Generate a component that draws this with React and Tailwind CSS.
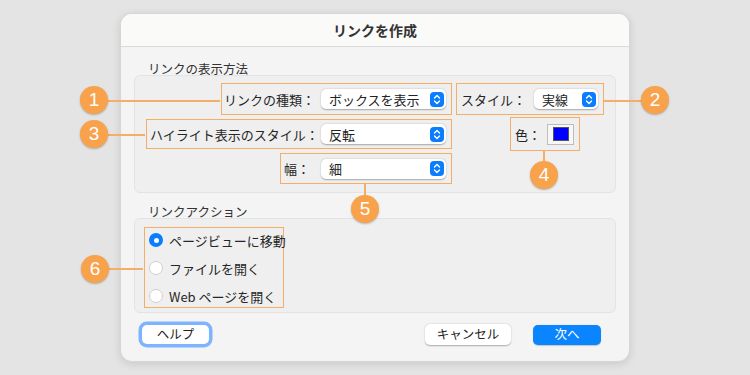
import React from 'react';

const FONT = { fontFamily: '"Noto Sans CJK JP", "Noto Sans", sans-serif' };

const Stepper = () => (
  <span className="flex h-[15px] w-[14px] items-center justify-center rounded-[4px] bg-[#0a7cff]">
    <svg width="8" height="11" viewBox="0 0 8 11" fill="none" stroke="white" strokeWidth="1.4" strokeLinecap="round" strokeLinejoin="round">
      <path d="M1.5 4 L4 1.5 L6.5 4" />
      <path d="M1.5 7 L4 9.5 L6.5 7" />
    </svg>
  </span>
);

const Popup = ({ value, width }) => (
  <div
    className={`flex h-[20px] items-center justify-between rounded-[5px] bg-white pl-[8px] pr-[2px] text-[13px] text-[#222] shadow-[0_0.5px_1.5px_rgba(0,0,0,0.3)] ${width}`}
  >
    <span className="leading-none">{value}</span>
    <Stepper />
  </div>
);

const Hl = ({ className = '', children }) => (
  <div className={`flex items-center justify-between border-[1.5px] border-[#f4ae68] ${className}`}>
    {children}
  </div>
);

const Label = ({ children }) => <span className="whitespace-nowrap text-[13px] leading-none text-[#262626]">{children}</span>;

const Callout = ({ n, className }) => (
  <div
    className={`absolute flex h-[28px] w-[28px] items-center justify-center rounded-full bg-[#f8a24c] text-[19px] font-medium text-white shadow-[0_1px_2px_rgba(0,0,0,0.25)] ${className}`}
    style={{ fontFamily: '"Liberation Sans", Arial, sans-serif' }}
  >
    {n}
  </div>
);

const Radio = ({ checked, label }) => (
  <div className="flex h-[20px] items-center gap-[6px]">
    {checked ? (
      <span className="flex h-[14px] w-[14px] shrink-0 items-center justify-center rounded-full bg-[#0a7cff]">
        <span className="h-[5px] w-[5px] rounded-full bg-white" />
      </span>
    ) : (
      <span className="h-[14px] w-[14px] shrink-0 rounded-full border border-[#cfcfcf] bg-white" />
    )}
    <span className="whitespace-nowrap text-[13px] leading-none text-[#262626]">{label}</span>
  </div>
);

export default function App() {
  return (
    <div className="relative h-[375px] w-[750px] overflow-hidden bg-[#e4e4e4]" style={FONT}>
      <div className="ml-[120px] mt-[13px] flex h-[349px] w-[510px] flex-col overflow-hidden rounded-[12px] border border-[#d6d6d6] bg-[#f4f4f4] shadow-[0_2px_8px_rgba(0,0,0,0.12)]">
        {/* title bar */}
        <div className="flex h-[33px] items-center justify-center border-b border-[#dadada] bg-[#fafaf9]">
          <span className="text-[14px] font-bold text-[#333]">リンクを作成</span>
        </div>

        <div className="flex flex-col px-[13px] pt-[15px]">
          <div className="h-[13px] pl-[14px] text-[12.5px] leading-[13px] text-[#333]">リンクの表示方法</div>

          {/* group 1 */}
          <div className="flex h-[118px] flex-col rounded-[6px] border border-[#e3e3e3] bg-[#efefef] pt-[7px]">
            <div className="flex h-[32px]">
              <div className="flex w-[317px] justify-end">
                <Hl className="h-[32px] w-[231px] pl-[2px] pr-[5px]">
                  <Label>リンクの種類：</Label>
                  <Popup value="ボックスを表示" width="w-[125px]" />
                </Hl>
              </div>
              <Hl className="ml-[4px] h-[32px] w-[148px] pl-[4px] pr-[5px]">
                <Label>スタイル：</Label>
                <Popup value="実線" width="w-[64px]" />
              </Hl>
            </div>
            <div className="mt-[2px] flex h-[34px] items-center">
              <div className="flex w-[317px] justify-end">
                <Hl className="h-[30px] w-[306px] pl-[3px] pr-[5px]">
                  <Label>ハイライト表示のスタイル：</Label>
                  <Popup value="反転" width="w-[125px]" />
                </Hl>
              </div>
              <Hl className="ml-[58px] h-[34px] w-[70px] pl-[4px] pr-[5px]">
                <Label>色：</Label>
                <span className="flex h-[21px] w-[27px] items-center justify-center border border-[#bdbdbd] bg-[#f7f7f7]">
                  <span className="h-[14px] w-[16px] border border-[#555] bg-[#0000ff]" />
                </span>
              </Hl>
            </div>
            <div className="mt-[2px] flex h-[31px]">
              <div className="flex w-[317px] justify-end">
                <Hl className="h-[31px] w-[172px] pl-[3px] pr-[5px]">
                  <Label>幅：</Label>
                  <Popup value="細" width="w-[125px]" />
                </Hl>
              </div>
            </div>
          </div>

          <div className="mt-[12px] h-[13px] pl-[14px] text-[12.5px] leading-[13px] text-[#333]">リンクアクション</div>

          {/* group 2 */}
          <div className="flex h-[95px] rounded-[6px] border border-[#e3e3e3] bg-[#efefef] pl-[9px] pt-[8px]">
            <div className="flex h-[81px] w-[140px] flex-col gap-[8px] border-[1.5px] border-[#f4ae68] pl-[4px] pt-[2px]">
              <Radio checked label="ページビューに移動" />
              <Radio label="ファイルを開く" />
              <Radio label="Web ページを開く" />
            </div>
          </div>

          {/* buttons */}
          <div className="mt-[11px] flex items-center">
            <button className="ml-[8px] flex h-[19px] w-[67px] items-center justify-center rounded-[5px] bg-white text-[12.5px] text-[#222] shadow-[0_0_0_3.5px_#7eb4ff]">
              ヘルプ
            </button>
            <button className="ml-[216px] flex h-[21px] w-[86px] items-center justify-center rounded-[5px] bg-white text-[12.5px] text-[#222] shadow-[0_0.5px_1.5px_rgba(0,0,0,0.3)]">
              キャンセル
            </button>
            <button className="ml-[22px] flex h-[20px] w-[68px] items-center justify-center rounded-[5px] bg-[#0a84ff] text-[12.5px] text-white shadow-[0_0.5px_1px_rgba(0,0,0,0.2)]">
              次へ
            </button>
          </div>
        </div>
      </div>

      {/* callout lines */}
      <div className="absolute left-[108px] top-[100px] h-[1.5px] w-[112px] bg-[#f4ae68]" />
      <div className="absolute left-[603px] top-[100px] h-[1.5px] w-[40px] bg-[#f4ae68]" />
      <div className="absolute left-[108px] top-[134px] h-[1.5px] w-[37px] bg-[#f4ae68]" />
      <div className="absolute left-[543px] top-[151px] h-[10px] w-[1.5px] bg-[#f4ae68]" />
      <div className="absolute left-[364px] top-[184px] h-[12px] w-[1.5px] bg-[#f4ae68]" />
      <div className="absolute left-[108px] top-[268px] h-[1.5px] w-[35px] bg-[#f4ae68]" />

      <Callout n="1" className="left-[80px] top-[86px]" />
      <Callout n="2" className="left-[641px] top-[86px]" />
      <Callout n="3" className="left-[80px] top-[120px]" />
      <Callout n="4" className="left-[530px] top-[161px]" />
      <Callout n="5" className="left-[351px] top-[195px]" />
      <Callout n="6" className="left-[81px] top-[255px]" />
    </div>
  );
}
